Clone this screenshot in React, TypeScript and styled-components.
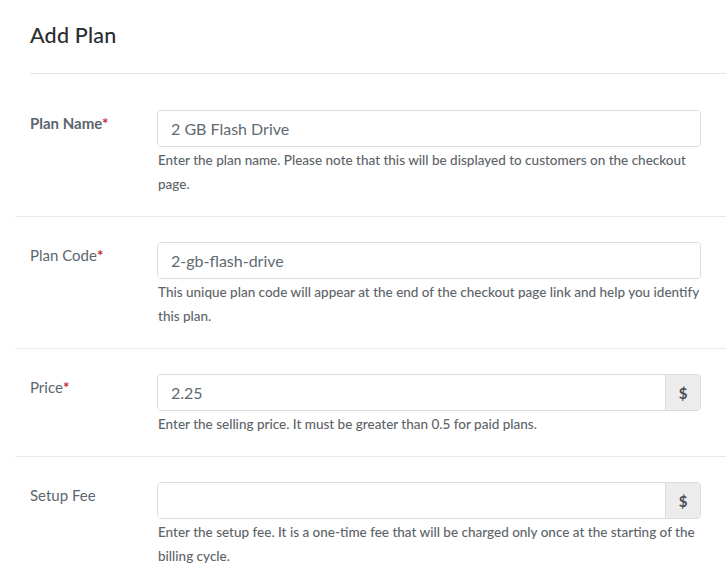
import React from 'react';
import styled, { createGlobalStyle } from 'styled-components';

const GlobalStyle = createGlobalStyle`
  html, body {
    margin: 0;
    padding: 0;
    background: #ffffff;
  }
  body {
    font-family: Lato, 'Liberation Sans', sans-serif;
  }
`;

const Page = styled.div`
  width: 726px;
  height: 585px;
  overflow: hidden;
  background: #ffffff;
`;

const Header = styled.div`
  box-sizing: border-box;
  height: 74px;
  margin-left: 30px;
  margin-bottom: 11px;
  padding-top: 21px;
  border-bottom: 1px solid #e6e6e6;
`;

const Title = styled.h2`
  margin: 0;
  font-size: 21.5px;
  font-weight: 500;
  line-height: 28px;
  letter-spacing: 0.2px;
  color: #2a2c30;
`;

const Row = styled.div<{ $last?: boolean }>`
  display: flex;
  margin-left: 15px;
  padding: 25px 25px 20px 15px;
  border-bottom: 1px solid ${(p) => (p.$last ? 'transparent' : '#e9e9e9')};
`;

const Label = styled.div<{ $strong?: boolean }>`
  width: 127px;
  flex-shrink: 0;
  padding-top: 3px;
  font-size: 15px;
  line-height: 20px;
  font-weight: ${(p) => (p.$strong ? 700 : 400)};
  color: #5c666e;
`;

const Required = styled.span`
  color: #c8283a;
  font-weight: 700;
`;

const Field = styled.div`
  flex: 1;
`;

const InputGroup = styled.div`
  display: flex;
  height: 37px;
  border: 1px solid #dcdcdc;
  border-radius: 4px;
  box-sizing: border-box;
  overflow: hidden;
`;

const TextInput = styled.input`
  flex: 1;
  min-width: 0;
  border: none;
  outline: none;
  padding: 0 13px;
  font-family: Lato, 'Liberation Sans', sans-serif;
  font-size: 16px;
  color: #5f6a72;
  background: #ffffff;
`;

const Addon = styled.div`
  width: 34px;
  display: flex;
  align-items: center;
  justify-content: center;
  background: #ececec;
  border-left: 1px solid #dcdcdc;
  font-size: 15px;
  font-weight: 700;
  color: #4a4f55;
`;

const Help = styled.p`
  margin: 1px 0 0 1px;
  font-size: 13.5px;
  line-height: 24px;
  font-weight: 500;
  color: #5d6469;
`;

type PlanField = {
  label: string;
  required: boolean;
  strong?: boolean;
  value: string;
  currency?: boolean;
  help: string;
};

const fields: PlanField[] = [
  {
    label: 'Plan Name',
    required: true,
    strong: true,
    value: '2 GB Flash Drive',
    help: 'Enter the plan name. Please note that this will be displayed to customers on the checkout page.',
  },
  {
    label: 'Plan Code',
    required: true,
    value: '2-gb-flash-drive',
    help: 'This unique plan code will appear at the end of the checkout page link and help you identify this plan.',
  },
  {
    label: 'Price',
    required: true,
    value: '2.25',
    currency: true,
    help: 'Enter the selling price. It must be greater than 0.5 for paid plans.',
  },
  {
    label: 'Setup Fee',
    required: false,
    value: '',
    currency: true,
    help: 'Enter the setup fee. It is a one-time fee that will be charged only once at the starting of the billing cycle.',
  },
];

const App = () => {
  return (
    <Page>
      <GlobalStyle />
      <Header>
        <Title>Add Plan</Title>
      </Header>
      {fields.map((f, i) => (
        <Row key={f.label} $last={i === fields.length - 1}>
          <Label $strong={f.strong}>
            {f.label}
            {f.required && <Required>*</Required>}
          </Label>
          <Field>
            <InputGroup>
              <TextInput type="text" defaultValue={f.value} />
              {f.currency && <Addon>$</Addon>}
            </InputGroup>
            <Help>{f.help}</Help>
          </Field>
        </Row>
      ))}
    </Page>
  );
};

export default App;
